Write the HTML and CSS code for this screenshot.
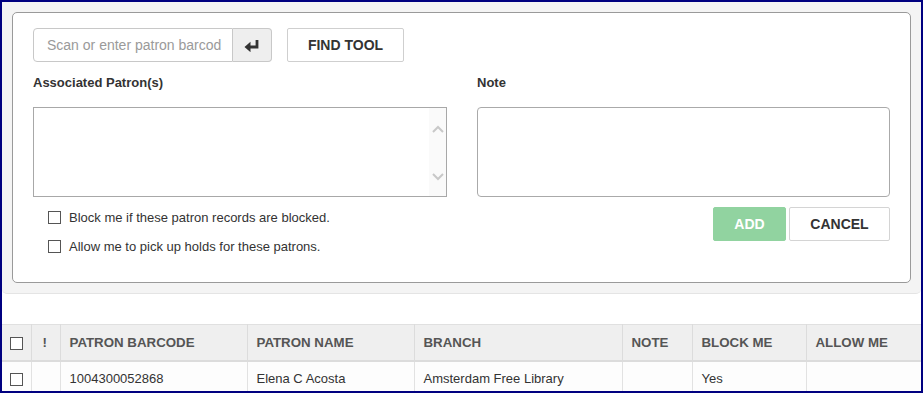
FILE: index.html
```html
<!DOCTYPE html>
<html>
<head>
<meta charset="utf-8">
<link rel="stylesheet" href="styles.css">
</head>
<body>
<div class="frame">
  <div class="panel">
    <div class="card">
      <div class="toprow">
        <div class="inputgroup">
          <div class="scaninput">Scan or enter patron barcod</div>
          <div class="enterbtn">
            <svg width="16" height="13" viewBox="0 0 16 13"><path d="M13 1 V8 H5" fill="none" stroke="#333" stroke-width="2.8"/><path d="M0.5 8 L6.5 2.8 V13.2 Z" fill="#333"/></svg>
          </div>
        </div>
        <button class="btn findbtn">FIND TOOL</button>
      </div>
      <div class="cols">
        <div class="col">
          <div class="label">Associated Patron(s)</div>
          <div class="patronbox">
            <div class="patronarea"></div>
            <div class="scrollbar">
              <svg width="12" height="8" viewBox="0 0 12 8"><path d="M1 7 L6 2 L11 7" fill="none" stroke="#c8c8c8" stroke-width="2"/></svg>
              <svg width="12" height="8" viewBox="0 0 12 8"><path d="M1 1 L6 6 L11 1" fill="none" stroke="#c8c8c8" stroke-width="2"/></svg>
            </div>
          </div>
          <div class="checks">
            <label class="check"><span class="box"></span>Block me if these patron records are blocked.</label>
            <label class="check"><span class="box"></span>Allow me to pick up holds for these patrons.</label>
          </div>
        </div>
        <div class="col">
          <div class="label">Note</div>
          <div class="notebox"></div>
          <div class="actions">
            <button class="btn addbtn">ADD</button>
            <button class="btn cancelbtn">CANCEL</button>
          </div>
        </div>
      </div>
    </div>
  </div>
  <table class="grid">
    <colgroup>
      <col style="width:29px"><col style="width:29px"><col style="width:187px"><col style="width:167px"><col style="width:208px"><col style="width:70px"><col style="width:114px"><col style="width:115px">
    </colgroup>
    <thead>
      <tr>
        <th class="cb"><span class="box"></span></th>
        <th class="bang">!</th>
        <th>PATRON BARCODE</th>
        <th>PATRON NAME</th>
        <th>BRANCH</th>
        <th>NOTE</th>
        <th>BLOCK ME</th>
        <th>ALLOW ME</th>
      </tr>
    </thead>
    <tbody>
      <tr>
        <td class="cb"><span class="box"></span></td>
        <td></td>
        <td>1004300052868</td>
        <td>Elena C Acosta</td>
        <td>Amsterdam Free Library</td>
        <td></td>
        <td>Yes</td>
        <td></td>
      </tr>
    </tbody>
  </table>
</div>
</body>
</html>
```
FILE: styles.css
```css
* { box-sizing: border-box; }
html, body { margin: 0; padding: 0; }
body {
  font-family: "Liberation Sans", Arial, sans-serif;
  color: #333;
  background: #fff;
}
.frame {
  width: 923px;
  height: 393px;
  border: 2px solid #000080;
  overflow: hidden;
  background: #fff;
}
.panel {
  background: #f4f4f4;
  padding: 10px;
  border-bottom: 1px solid #e4e4e4;
  border-radius: 0 0 5px 5px;
  height: 292px;
}
.card {
  background: #fff;
  border: 1px solid #9a9a9a;
  border-radius: 5px;
  height: 271px;
  padding: 15px 20px 0 20px;
}
.toprow {
  display: flex;
  gap: 15px;
  height: 34px;
}
.inputgroup {
  display: flex;
  width: 239px;
  height: 34px;
}
.scaninput {
  width: 200px;
  border: 1px solid #c8c8c8;
  border-radius: 4px 0 0 4px;
  font-size: 14px;
  color: #9a9a9a;
  padding: 0 0 0 13px;
  line-height: 32px;
  white-space: nowrap;
  overflow: hidden;
}
.enterbtn {
  width: 39px;
  background: #eeeeee;
  border: 1px solid #c8c8c8;
  border-left: none;
  border-radius: 0 4px 4px 0;
  display: flex;
  align-items: center;
  justify-content: center;
}
.btn {
  font-family: "Liberation Sans", Arial, sans-serif;
  font-weight: bold;
  font-size: 14px;
  border-radius: 2px;
  padding: 0;
  height: 34px;
  cursor: pointer;
}
.findbtn {
  width: 117px;
  background: #fff;
  border: 1px solid #cfcfcf;
  color: #333;
}
.cols {
  display: flex;
  gap: 30px;
  margin-top: 12px;
}
.col { display: flex; flex-direction: column; }
.col:first-child { width: 414px; }
.col:last-child { width: 413px; }
.label {
  font-size: 13px;
  font-weight: bold;
  color: #333;
  height: 14px;
  line-height: 14px;
  margin-top: 2px;
  margin-bottom: 17px;
}
.patronbox {
  display: flex;
  height: 90px;
  border: 1px solid #a8a8a8;
}
.patronarea { flex: 1; }
.scrollbar {
  width: 17px;
  background: #fafafa;
  display: flex;
  flex-direction: column;
  align-items: center;
  justify-content: space-between;
  padding: 17px 0 15px 0;
}
.notebox {
  height: 90px;
  border: 1px solid #aaa;
  border-radius: 4px;
}
.checks {
  display: flex;
  flex-direction: column;
  gap: 15px;
  padding: 13px 0 0 15px;
}
.check {
  display: flex;
  align-items: center;
  gap: 8px;
  font-size: 13px;
  color: #333;
  height: 14px;
}
.box {
  display: inline-block;
  width: 13px;
  height: 13px;
  border: 1px solid #555;
  background: #fff;
}
.actions {
  display: flex;
  justify-content: flex-end;
  gap: 3px;
  margin-top: 10px;
}
.addbtn {
  width: 73px;
  background: #91d3a0;
  border: 1px solid #91d3a0;
  color: #fff;
}
.cancelbtn {
  width: 101px;
  background: #fff;
  border: 1px solid #d4d4d4;
  color: #333;
}
.grid {
  margin-top: 30px;
  width: 919px;
  table-layout: fixed;
  border-collapse: collapse;
  font-size: 13px;
}
.grid th {
  background: #efefef;
  color: #555;
  font-weight: bold;
  font-size: 13.3px;
  text-align: left;
  height: 36px;
  padding: 0 0 0 9px;
  border: 1px solid #dcdcdc;
  border-bottom: 2px solid #dcdcdc;
  border-top: 1px solid #e0e0e0;
  white-space: nowrap;
}
.grid td {
  background: #fdfdfd;
  color: #333;
  height: 32px;
  padding: 3px 0 0 9px;
  border: 1px solid #e2e2e2;
  border-bottom: none;
  white-space: nowrap;
}
.grid th:first-child, .grid td:first-child { border-left: none; }
.grid th:last-child, .grid td:last-child { border-right: none; }
.grid .cb { padding-left: 8px; }
.grid .cb .box { vertical-align: middle; width: 13px; height: 13px; }
.grid .bang { padding-left: 11px; }
```
